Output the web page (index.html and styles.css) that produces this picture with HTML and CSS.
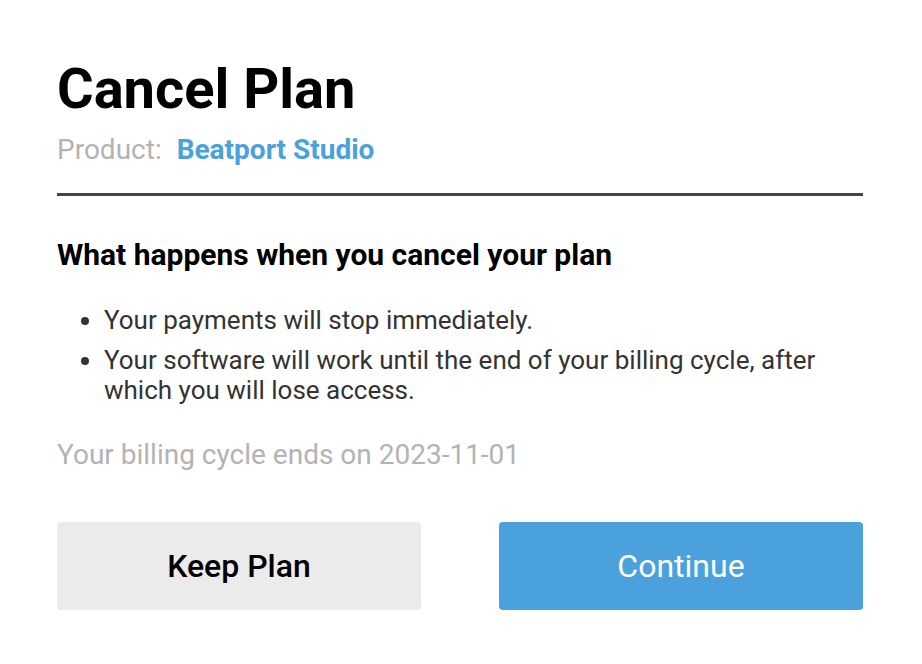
FILE: index.html
```html
<!DOCTYPE html>
<html lang="en">

<head>
    <meta charset="UTF-8">
    <meta name="viewport" content="width=device-width, initial-scale=1.0">
    <title>Cancel Plan</title>
    <link rel="stylesheet" href="styles.css">
</head>

<body>
    <div class="modal">
        <h1 class="title">Cancel Plan</h1>
        <div class="product">
            <span class="product-label">Product:</span>
            <span class="product-name">Beatport Studio</span>
        </div>
        <hr class="divider">
        <h2 class="subtitle">What happens when you cancel your plan</h2>
        <ul class="effects">
            <li>Your payments will stop immediately.</li>
            <li>Your software will work until the end of your billing cycle, after which you will lose access.</li>
        </ul>
        <p class="billing">Your billing cycle ends on 2023-11-01</p>
        <div class="actions">
            <button class="btn btn-keep">Keep Plan</button>
            <button class="btn btn-continue">Continue</button>
        </div>
    </div>
</body>

</html>
```

FILE: styles.css
```css
body {
    margin: 0;
    font-family: Roboto, "Liberation Sans", sans-serif;
    background-color: #fff;
    color: #000;
}

.modal {
    padding: 54px 59px 0 57px;
}

.title {
    margin: 0;
    font-size: 56px;
    font-weight: 700;
    line-height: 70px;
}

.product {
    margin-top: 10px;
    font-size: 28px;
    line-height: 32px;
}

.product-label {
    color: #b3b3b3;
    margin-right: 8px;
}

.product-name {
    color: #4aa1db;
    font-weight: 700;
}

.divider {
    border: none;
    height: 3px;
    background-color: #444;
    margin: 27px 0 0;
}

.subtitle {
    margin: 41px 0 0;
    font-size: 30px;
    font-weight: 700;
    line-height: 36px;
}

.effects {
    margin: 32px 0 0;
    padding-left: 47px;
    color: #333;
    font-size: 26px;
    line-height: 30px;
}

.effects li {
    margin-bottom: 10px;
}

.effects li:last-child {
    margin-bottom: 0;
}

.billing {
    margin: 34px 0 0;
    color: #b3b3b3;
    font-size: 28px;
    line-height: 32px;
}

.actions {
    display: flex;
    gap: 78px;
    margin-top: 51px;
}

.btn {
    flex: 1;
    height: 88px;
    border: none;
    border-radius: 4px;
    font-family: Roboto, "Liberation Sans", sans-serif;
    font-size: 32px;
    cursor: pointer;
}

.btn-keep {
    background-color: #ebebeb;
    color: #000;
    font-weight: 500;
}

.btn-continue {
    background-color: #4aa1db;
    color: #fff;
}
```
